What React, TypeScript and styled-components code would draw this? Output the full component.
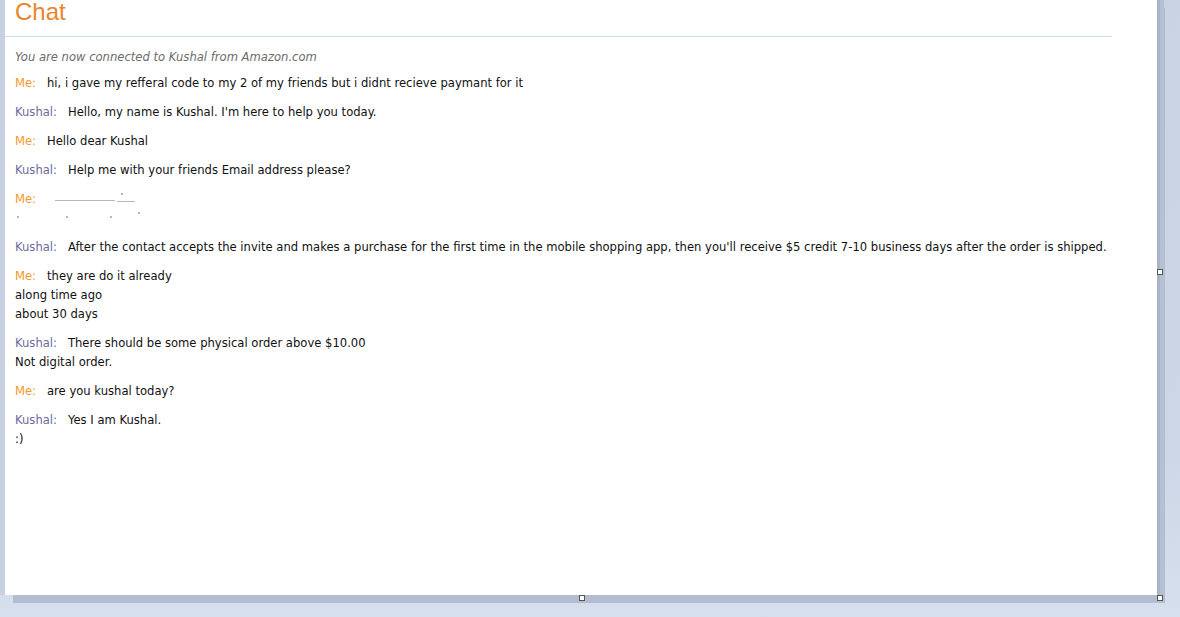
import React from "react";
import styled, { createGlobalStyle } from "styled-components";

const Global = createGlobalStyle`
  html, body { margin: 0; padding: 0; }
  body {
    width: 1180px;
    height: 617px;
    overflow: hidden;
    background: #d5dfee;
    font-family: "DejaVu Sans", Verdana, sans-serif;
  }
`;

const Workspace = styled.div`
  display: flex;
  align-items: flex-start;
  width: 1180px;
  height: 617px;
  background: linear-gradient(to bottom, #c9d3e4 0%, #ccd6e6 70%, #d5dfee 100%);
`;

const LeftRail = styled.div`
  width: 5px;
  height: 595px;
  background: #c8d1e1;
  flex: none;
`;

const Page = styled.div`
  position: relative;
  width: 1152px;
  height: 595px;
  background: #ffffff;
  box-shadow: 3px 0 0 0 #a9b4c9, 7px 0 0 0 #b6c0d3, 8px 8px 0 0 #b3bdd0;
  flex: none;
`;

const Header = styled.div`
  width: 1107px;
  padding: 0 0 12px 10px;
  box-sizing: border-box;
  border-bottom: 1px solid #c5dff0;
`;

const Title = styled.h1`
  margin: 0;
  font-family: "Liberation Sans", Arial, sans-serif;
  font-weight: normal;
  font-size: 24px;
  line-height: 24px;
  color: #e8862c;
`;

const Transcript = styled.div`
  padding: 11px 0 0 10px;
  font-size: 11.58px;
  line-height: 19px;
  color: #111;
`;

const Intro = styled.div`
  font-style: italic;
  color: #6b6b6b;
  margin-bottom: 7px;
`;

const Message = styled.div`
  margin-bottom: 10px;
  white-space: nowrap;
`;

const Speaker = styled.span<{ $me?: boolean }>`
  color: ${(p) => (p.$me ? "#f59a2a" : "#6d6a9c")};
  margin-right: 11px;
`;

const Redacted = styled.span<{ $w: number; $h?: number; $lift?: number; $gap?: number }>`
  display: inline-block;
  width: ${(p) => p.$w}px;
  height: ${(p) => p.$h ?? 1}px;
  margin-left: ${(p) => p.$gap ?? 4}px;
  background: #b4b8be;
  vertical-align: ${(p) => p.$lift ?? 2}px;
`;

const Handle = styled.div<{ $x: number; $y: number }>`
  position: absolute;
  left: ${(p) => p.$x}px;
  top: ${(p) => p.$y}px;
  width: 4px;
  height: 4px;
  background: #fff;
  border: 1px solid #555;
`;

type Msg = { me?: boolean; lines: string[] };

const messages: Msg[] = [
  { me: true, lines: ["hi, i gave my refferal code to my 2 of my friends but i didnt recieve paymant for it"] },
  { lines: ["Hello, my name is Kushal. I'm here to help you today."] },
  { me: true, lines: ["Hello dear Kushal"] },
  { lines: ["Help me with your friends Email address please?"] },
];

const messages2: Msg[] = [
  {
    lines: [
      "After the contact accepts the invite and makes a purchase for the first time in the mobile shopping app, then you'll receive $5 credit 7-10 business days after the order is shipped.",
    ],
  },
  { me: true, lines: ["they are do it already", "along time ago", "about 30 days"] },
  { lines: ["There should be some physical order above $10.00", "Not digital order."] },
  { me: true, lines: ["are you kushal today?"] },
  { lines: ["Yes I am Kushal.", ":)"] },
];

const Line = styled.div``;

function renderMsg(m: Msg, i: number) {
  return (
    <Message key={i}>
      <Speaker $me={m.me}>{m.me ? "Me:" : "Kushal:"}</Speaker>
      {m.lines[0]}
      {m.lines.slice(1).map((l, j) => (
        <Line key={j}>{l}</Line>
      ))}
    </Message>
  );
}

export default function App() {
  return (
    <>
      <Global />
      <Workspace>
        <LeftRail />
        <Page>
          <Header>
            <Title>Chat</Title>
          </Header>
          <Transcript>
            <Intro>You are now connected to Kushal from Amazon.com</Intro>
            {messages.map(renderMsg)}
            <Message>
              <Speaker $me>Me:</Speaker>
              <Redacted $w={60} $gap={8} />
              <Redacted $w={18} $gap={2} $lift={1} />
              <Redacted $w={2} $h={2} $gap={-14} $lift={8} />
              <Line>
                <Redacted $w={2} $h={2} $gap={2} $lift={4} />
                <Redacted $w={2} $h={2} $gap={47} $lift={4} />
                <Redacted $w={2} $h={2} $gap={42} $lift={4} />
                <Redacted $w={2} $h={2} $gap={26} $lift={8} />
              </Line>
            </Message>
            {messages2.map(renderMsg)}
          </Transcript>
          <Handle $x={1152} $y={269} />
          <Handle $x={574} $y={595} />
          <Handle $x={1152} $y={595} />
        </Page>
      </Workspace>
    </>
  );
}
